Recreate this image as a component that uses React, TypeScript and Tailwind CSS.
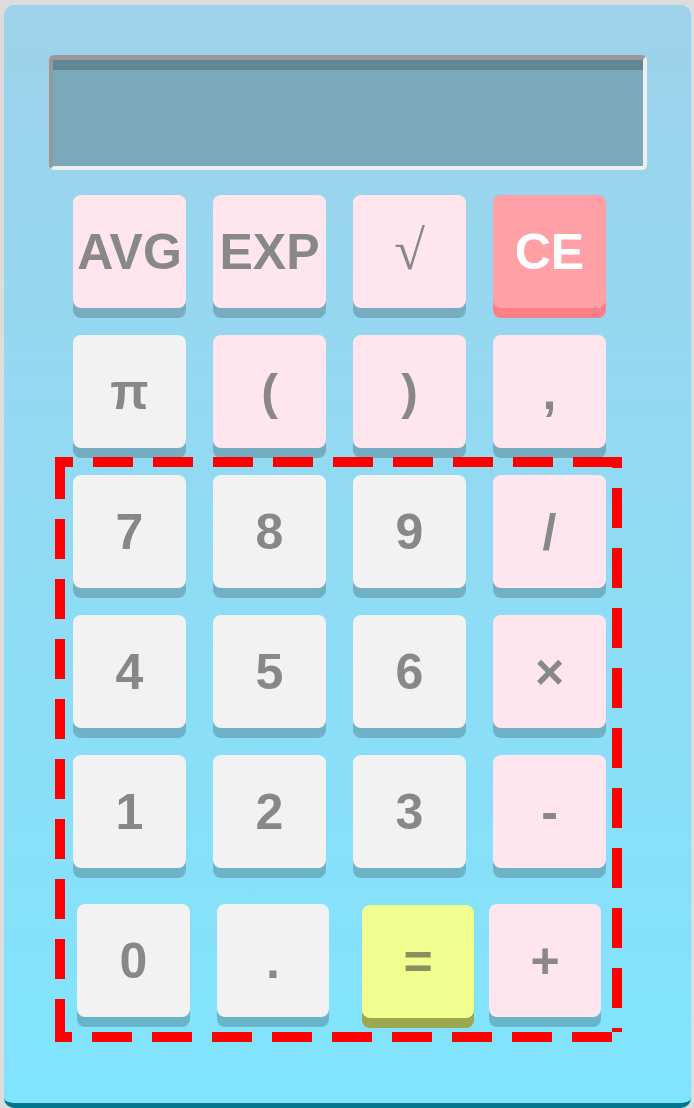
import React from "react";

type K = { label: string; kind: "pink" | "gray" | "red" | "yellow"; w?: string; extra?: string; font?: string };

const base =
  "h-[113px] rounded-[8px] flex items-center justify-center font-bold text-[50px] leading-none shrink-0";

function Key({ label, kind, w = "w-[113px]", extra = "", font }: K) {
  let cls = "";
  if (kind === "pink") cls = "bg-[#ffe6ee] text-[#888888] shadow-[0_10px_0_rgba(0,0,0,0.2)]";
  if (kind === "gray") cls = "bg-[#f2f2f2] text-[#888888] shadow-[0_10px_0_rgba(0,0,0,0.2)]";
  if (kind === "red") cls = "bg-[#ffa0a6] text-white shadow-[0_10px_0_#ff7f88]";
  if (kind === "yellow") cls = "bg-[#f0ff8f] text-[#8a8f60] shadow-[0_10px_0_#9ca850]";
  return (
    <div
      className={`${base} ${w} ${cls} ${extra}`}
      style={{ fontFamily: font ?? '"Liberation Sans", Arial, sans-serif' }}
    >
      <span>{label}</span>
    </div>
  );
}

function Row({ keys }: { keys: K[] }) {
  return (
    <div className="flex gap-[27px]">
      {keys.map((k, i) => (
        <Key key={i} {...k} />
      ))}
    </div>
  );
}

function DashedOutline() {
  return (
    <svg className="pointer-events-none absolute inset-0" width="567" height="585" viewBox="0 0 567 585">
      <g stroke="#ff0000" strokeWidth="10" strokeDasharray="40 20" fill="none">
        <line x1="0" y1="5" x2="567" y2="5" strokeDashoffset="22" />
        <line x1="562" y1="0" x2="562" y2="575" strokeDashoffset="29" />
        <line x1="0" y1="580" x2="557" y2="580" strokeDashoffset="23" />
        <line x1="5" y1="0" x2="5" y2="585" strokeDashoffset="-2" />
      </g>
    </svg>
  );
}

export default function App() {
  return (
    <div className="h-[1108px] overflow-hidden bg-[#dcdcdc] pt-[5px] pl-[4px]">
      <div className="h-[1103px] w-[687px] rounded-[10px] border-b-[5px] border-[#00778f] bg-gradient-to-b from-[#9dd2ea] to-[#80e4fe] pt-[50px] pl-[45px]">
        <div className="h-[115px] w-[598px] rounded-[5px] border-t-[5px] border-l-[4px] border-r-[4px] border-b-[4px] border-t-[#999999] border-l-[#999999] border-r-[#eeeeee] border-b-[#eeeeee] bg-[#7aa9bc] shadow-[inset_0_10px_0_rgba(0,0,0,0.2)]" />
        <div className="ml-[24px] mt-[25px] flex flex-col">
          <Row
            keys={[
              { label: "AVG", kind: "pink" },
              { label: "EXP", kind: "pink" },
              { label: "√", kind: "pink", extra: "font-normal !text-[56px] pb-[4px]", font: '"Liberation Serif", serif' },
              { label: "CE", kind: "red" },
            ]}
          />
          <div className="mt-[27px]">
            <Row
              keys={[
                { label: "π", kind: "gray" },
                { label: "(", kind: "pink" },
                { label: ")", kind: "pink" },
                { label: ",", kind: "pink" },
              ]}
            />
          </div>
          <div className="relative -ml-[18px] mt-[9px] h-[585px] w-[567px] pl-[18px] pt-[18px]">
            <div className="flex flex-col gap-[27px]">
              <Row
                keys={[
                  { label: "7", kind: "gray" },
                  { label: "8", kind: "gray" },
                  { label: "9", kind: "gray" },
                  { label: "/", kind: "pink" },
                ]}
              />
              <Row
                keys={[
                  { label: "4", kind: "gray" },
                  { label: "5", kind: "gray" },
                  { label: "6", kind: "gray" },
                  { label: "×", kind: "pink" },
                ]}
              />
              <Row
                keys={[
                  { label: "1", kind: "gray" },
                  { label: "2", kind: "gray" },
                  { label: "3", kind: "gray" },
                  { label: "-", kind: "pink" },
                ]}
              />
            </div>
            <div className="mt-[36px] ml-[4px] flex items-start">
              <Key label="0" kind="gray" />
              <Key label="." kind="gray" w="w-[112px]" extra="ml-[27px]" />
              <Key label="=" kind="yellow" w="w-[112px]" extra="ml-[33px] mt-[1px]" />
              <Key label="+" kind="pink" w="w-[112px]" extra="ml-[15px]" />
            </div>
            <DashedOutline />
          </div>
        </div>
      </div>
    </div>
  );
}
